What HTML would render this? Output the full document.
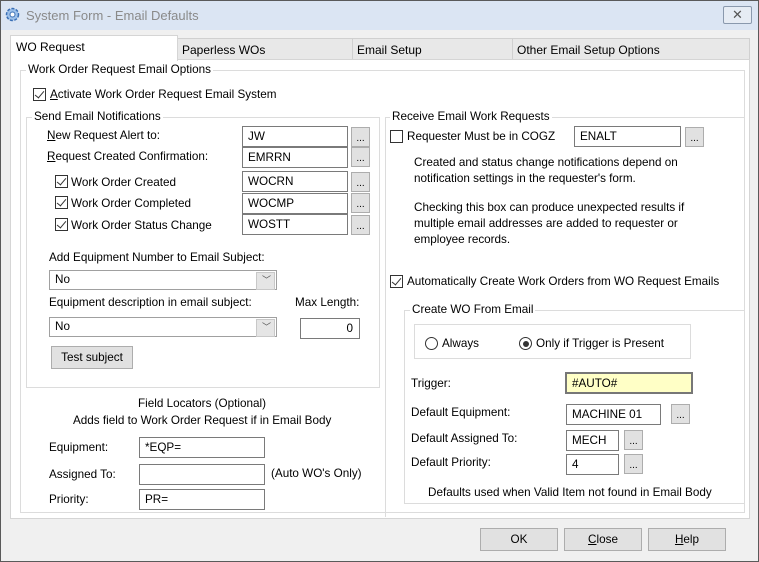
<!DOCTYPE html>
<html><head><style>
*{box-sizing:border-box;margin:0;padding:0}
body{width:759px;height:562px;overflow:hidden;background:#f0f0f0;font-family:"Liberation Sans",sans-serif;font-size:11.7px;color:#000;position:relative}
.a{position:absolute;white-space:nowrap}
.win{left:0;top:0;width:759px;height:562px;border:1px solid #5a5a5a}
.title{left:1px;top:1px;width:757px;height:29px;background:#dbe5f3}
.tab{position:absolute;top:38px;height:22px;background:#e8e8e8;border:1px solid #d0d0d0;border-bottom:none;padding:4px 0 0 4px;font-size:12px}
.panel{left:10px;top:59px;width:740px;height:460px;background:#fff;border:1px solid #d5d5d5}
.grp{position:absolute;border:1px solid #dcdcdc}
.leg{position:absolute;background:#fff;padding:0 2px;top:-8px;left:5px}
.inp{position:absolute;height:21px;border:1px solid #7a7a7a;background:#fff;padding:3px 0 0 5px}
.btn{position:absolute;width:19px;height:20px;border:1px solid #adadad;background:#e1e1e1;font-size:10px;text-align:center;line-height:22px}
.cb{position:absolute;width:13px;height:13px;border:1px solid #333;background:#fff}
.cb.on::after{content:"";position:absolute;left:3px;top:0px;width:4px;height:8px;border:solid #333;border-width:0 1.5px 1.5px 0;transform:rotate(40deg)}
.sel{position:absolute;height:20px;border:1px solid #a0a0a0;background:#fff;padding:2px 0 0 5px}
.sel::after{content:"";position:absolute;right:1px;top:1px;width:17px;height:16px;background:#e5e5e5;border:1px solid #c8c8c8}
.sel span{position:absolute;right:5px;top:2px;z-index:1;font-size:9px;color:#555}
.pb{position:absolute;height:23px;border:1px solid #adadad;background:#e1e1e1;text-align:center;line-height:21px}
.rad{position:absolute;width:13px;height:13px;border:1px solid #333;border-radius:50%;background:#fff}
u{text-decoration:underline}
</style></head><body>
<div class="a win"></div>
<div class="a title"></div>
<svg class="a" style="left:4px;top:6px" width="17" height="17" viewBox="0 0 17 17"><circle cx="8.5" cy="8.5" r="6" fill="#9cc0ea" stroke="#3a6fb5" stroke-width="1.5" stroke-dasharray="3 1.5"/><circle cx="8.5" cy="8.5" r="2.5" fill="#fff" stroke="#3a6fb5"/></svg>
<div class="a" style="left:26px;top:8px;color:#8a8a8a;font-size:13px">System Form - Email Defaults</div>
<div class="a" style="left:723px;top:6px;width:29px;height:18px;border:1px solid #8a99ad;border-radius:2px;background:#e6ecf4;text-align:center;font-size:13px;line-height:16px;color:#555">✕</div>

<div class="tab" style="left:177px;width:176px">Paperless WOs</div>
<div class="tab" style="left:352px;width:161px">Email Setup</div>
<div class="tab" style="left:512px;width:238px">Other Email Setup Options</div>
<div class="a panel"></div>
<div class="a" style="left:10px;top:35px;width:168px;height:26px;background:#fff;border:1px solid #d5d5d5;border-bottom:none;padding:4px 0 0 5px;font-size:12px">WO Request</div>

<div class="grp" style="left:20px;top:70px;width:725px;height:443px"><div class="leg">Work Order Request Email Options</div></div>
<div class="cb on" style="left:33px;top:88px"></div>
<div class="a" style="left:50px;top:88px"><u>A</u>ctivate Work Order Request Email System</div>

<div class="grp" style="left:26px;top:117px;width:354px;height:271px"><div class="leg">Send Email Notifications</div></div>
<div class="a" style="left:47px;top:129px"><u>N</u>ew Request Alert to:</div>
<div class="a" style="left:47px;top:150px"><u>R</u>equest Created Confirmation:</div>
<div class="cb on" style="left:55px;top:175px"></div><div class="a" style="left:71px;top:176px">Work Order Created</div>
<div class="cb on" style="left:55px;top:196px"></div><div class="a" style="left:71px;top:197px">Work Order Completed</div>
<div class="cb on" style="left:55px;top:218px"></div><div class="a" style="left:71px;top:219px">Work Order Status Change</div>
<div class="inp" style="left:242px;top:126px;width:106px">JW</div><div class="btn" style="left:351px;top:127px">...</div>
<div class="inp" style="left:242px;top:147px;width:106px">EMRRN</div><div class="btn" style="left:351px;top:147px">...</div>
<div class="inp" style="left:242px;top:171px;width:106px">WOCRN</div><div class="btn" style="left:351px;top:172px">...</div>
<div class="inp" style="left:242px;top:193px;width:106px">WOCMP</div><div class="btn" style="left:351px;top:193px">...</div>
<div class="inp" style="left:242px;top:214px;width:106px">WOSTT</div><div class="btn" style="left:351px;top:215px">...</div>
<div class="a" style="left:49px;top:251px">Add Equipment Number to Email Subject:</div>
<div class="sel" style="left:49px;top:270px;width:228px">No<span>﹀</span></div>
<div class="a" style="left:49px;top:296px">Equipment description in email subject:</div>
<div class="a" style="left:295px;top:296px">Max Length:</div>
<div class="sel" style="left:49px;top:317px;width:228px">No<span>﹀</span></div>
<div class="inp" style="left:300px;top:318px;width:60px;text-align:right;padding-right:6px">0</div>
<div class="pb" style="left:51px;top:346px;width:82px">Test subject</div>

<div class="a" style="left:138px;top:397px">Field Locators (Optional)</div>
<div class="a" style="left:73px;top:414px">Adds field to Work Order Request if in Email Body</div>
<div class="a" style="left:49px;top:441px">Equipment:</div><div class="inp" style="left:139px;top:437px;width:126px">*EQP=</div>
<div class="a" style="left:49px;top:468px">Assigned To:</div><div class="inp" style="left:139px;top:464px;width:126px"></div>
<div class="a" style="left:271px;top:467px">(Auto WO's Only)</div>
<div class="a" style="left:49px;top:493px">Priority:</div><div class="inp" style="left:139px;top:489px;width:126px">PR=</div>

<div class="grp" style="left:385px;top:117px;width:360px;height:400px;border-right:none;border-bottom:none"><div class="leg" style="left:4px">Receive Email Work Requests</div></div>
<div class="cb" style="left:390px;top:130px"></div><div class="a" style="left:407px;top:130px">Requester Must be in COGZ</div>
<div class="inp" style="left:574px;top:126px;width:107px">ENALT</div><div class="btn" style="left:685px;top:127px">...</div>
<div class="a" style="left:414px;top:155px;line-height:16px">Created and status change notifications depend on<br>notification settings in the requester's form.</div>
<div class="a" style="left:414px;top:200px;line-height:16px">Checking this box can produce unexpected results if<br>multiple email addresses are added to requester or<br>employee records.</div>
<div class="cb on" style="left:390px;top:275px"></div><div class="a" style="left:407px;top:275px">Automatically Create Work Orders from WO Request Emails</div>

<div class="grp" style="left:404px;top:310px;width:341px;height:194px;border-right:none"><div class="leg">Create WO From Email</div></div>
<div class="a" style="left:414px;top:324px;width:277px;height:35px;border:1px solid #dcdcdc"></div>
<div class="rad" style="left:425px;top:337px"></div><div class="a" style="left:442px;top:337px">Always</div>
<div class="rad" style="left:519px;top:337px"><div style="position:absolute;left:2.5px;top:2.5px;width:6px;height:6px;border-radius:50%;background:#333"></div></div>
<div class="a" style="left:536px;top:337px">Only if Trigger is Present</div>
<div class="a" style="left:411px;top:377px">Trigger:</div>
<div class="inp" style="left:565px;top:372px;width:128px;height:22px;background:#ffffc6;border:2px solid #777">#AUTO#</div>
<div class="a" style="left:411px;top:406px">Default Equipment:</div>
<div class="inp" style="left:566px;top:404px;width:95px">MACHINE 01</div><div class="btn" style="left:671px;top:404px">...</div>
<div class="a" style="left:411px;top:432px">Default Assigned To:</div>
<div class="inp" style="left:566px;top:430px;width:53px">MECH</div><div class="btn" style="left:624px;top:430px">...</div>
<div class="a" style="left:411px;top:456px">Default Priority:</div>
<div class="inp" style="left:566px;top:454px;width:53px">4</div><div class="btn" style="left:624px;top:454px">...</div>
<div class="a" style="left:428px;top:486px">Defaults used when Valid Item not found in Email Body</div>

<div class="pb" style="left:480px;top:528px;width:78px">OK</div>
<div class="pb" style="left:564px;top:528px;width:78px"><u>C</u>lose</div>
<div class="pb" style="left:648px;top:528px;width:78px"><u>H</u>elp</div>
</body></html>
